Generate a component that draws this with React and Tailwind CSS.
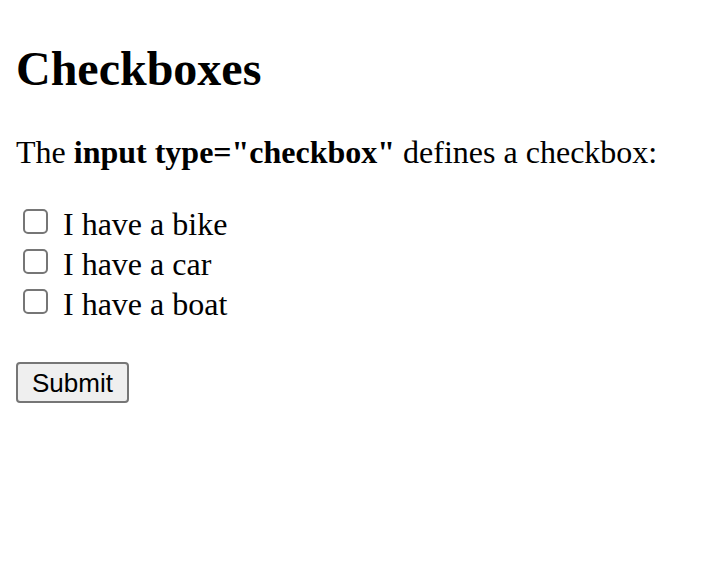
const items = ["I have a bike", "I have a car", "I have a boat"];

const Checkbox = () => (
  <span className="ml-[7px] mt-[5px] block w-[25px] h-[25px] shrink-0 rounded-[5px] border-2 border-[#767676] bg-white" />
);

export default function App() {
  return (
    <div className="min-h-screen bg-white text-black pl-[16px] pt-[45px] font-['Liberation_Serif','Times_New_Roman',serif]">
      <h1 className="text-[48px] leading-[48px] font-bold">Checkboxes</h1>

      <p className="mt-[43px] text-[32px] leading-[32px]">
        The <b>input type="checkbox"</b> defines a checkbox:
      </p>

      <form className="mt-[36px]" onSubmit={(e) => e.preventDefault()}>
        {items.map((label) => (
          <div key={label} className="flex items-start h-[40px]">
            <Checkbox />
            <span className="ml-[15px] text-[32px] leading-[40px]">{label}</span>
          </div>
        ))}

        <button
          type="submit"
          className="mt-[38px] flex items-center justify-center w-[113px] h-[41px] rounded-[4px] border-2 border-[#767676] bg-[#efefef] text-[26px] leading-none font-['Liberation_Sans',Arial,sans-serif]"
        >
          Submit
        </button>
      </form>
    </div>
  );
}
